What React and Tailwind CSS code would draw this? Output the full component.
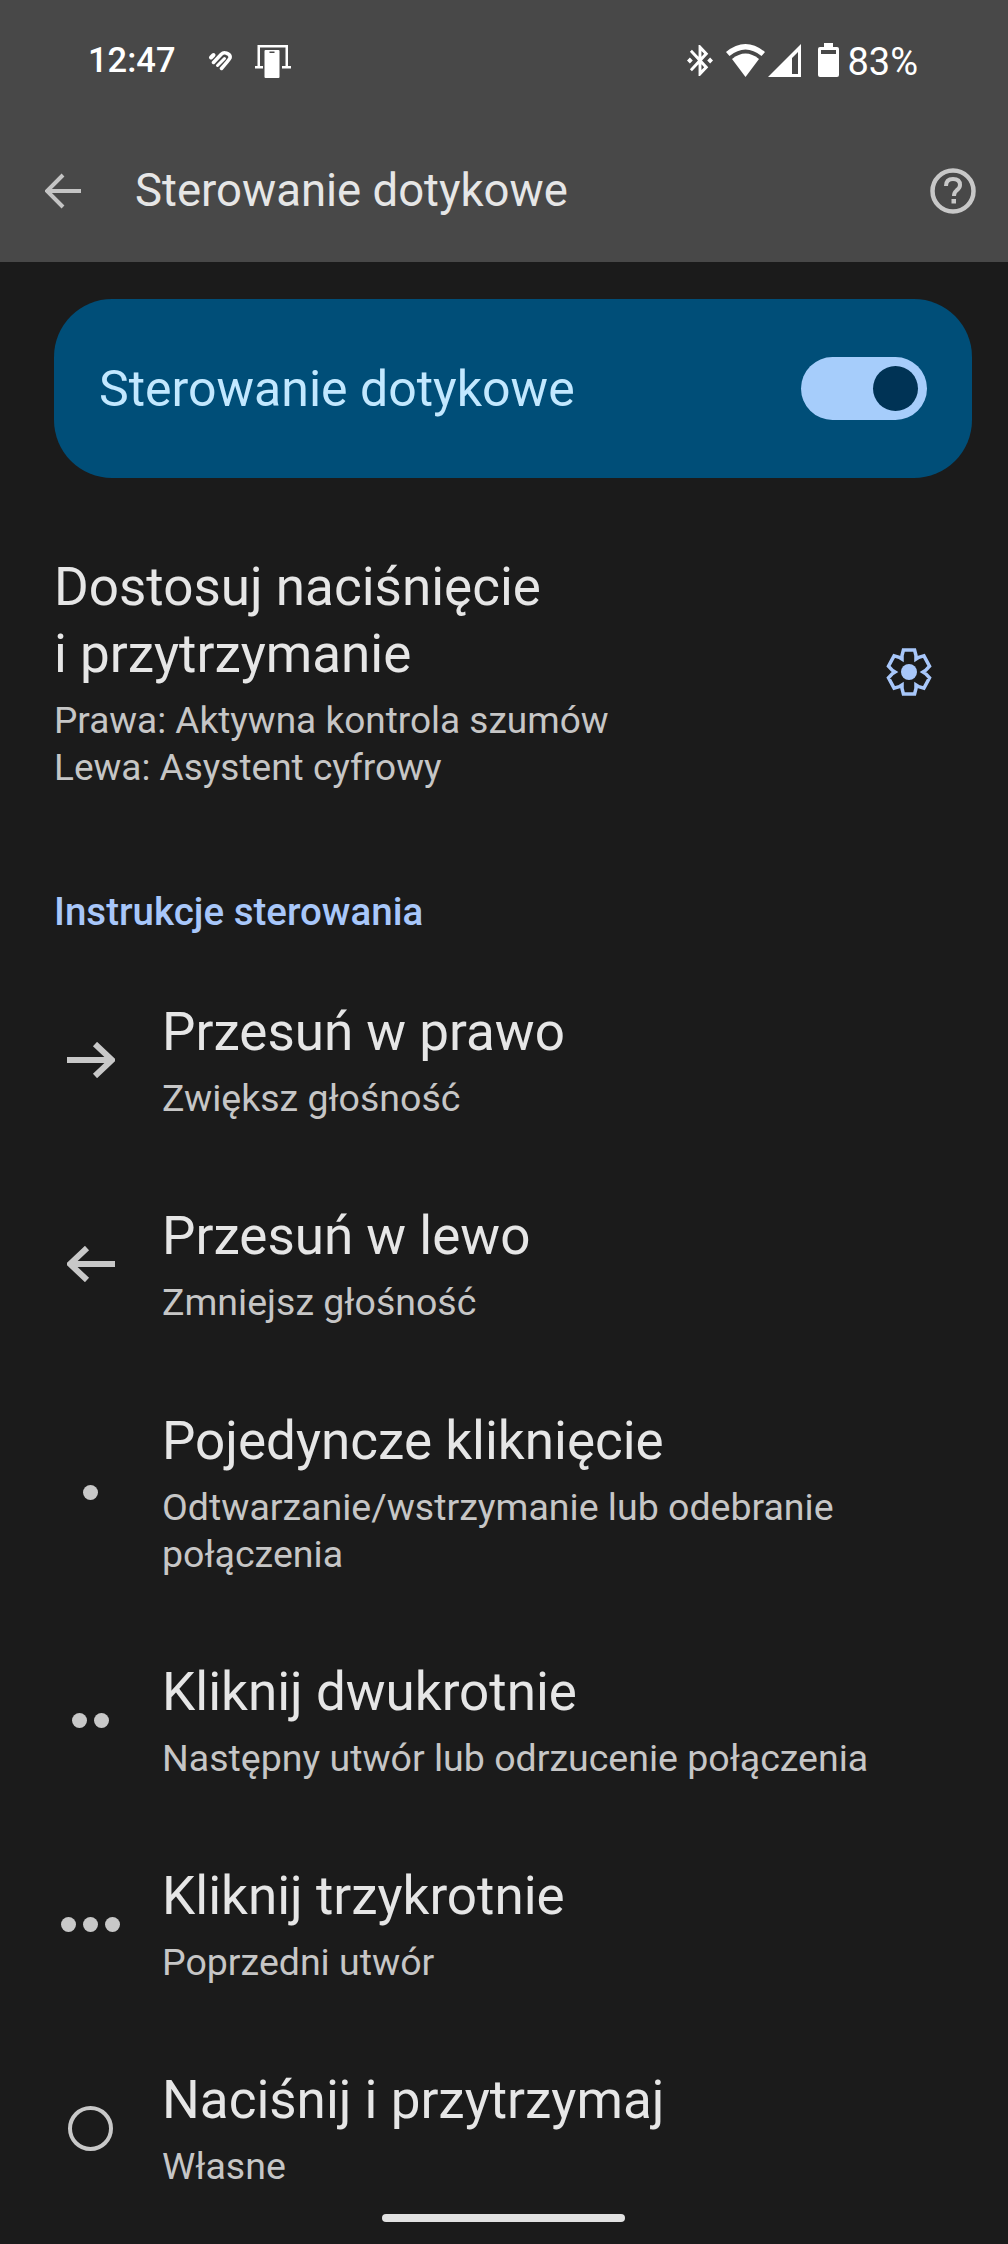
const sans = "font-['Roboto',sans-serif]";

function Row({ icon, title, sub, h }) {
  return (
    <div className={`flex items-center pl-[54px] pr-[36px] ${h}`}>
      <div className="w-[73px] shrink-0 flex justify-center items-center">{icon}</div>
      <div className="ml-[35px] min-w-0 flex-1 mt-[1px]">
        <div className="text-[53px] leading-[67px] text-[#e6e6e6]">{title}</div>
        <div className="mt-[9px] text-[37.500px] leading-[47px] text-[#c6c6c6]">{sub}</div>
      </div>
    </div>
  );
}

const Dot = () => <span className="block w-[15px] h-[15px] rounded-full bg-[#c8c8c8]" />;

function Arrow({ flip }) {
  return (
    <svg width="48" height="36" viewBox="0 0 48 36" className={flip ? "-scale-x-100" : ""}>
      <path d="M0 18H45M28 2L45 18L28 34" fill="none" stroke="#c8c8c8" strokeWidth="6" />
    </svg>
  );
}

function Gear() {
  let d = "";
  for (let k = 0; k < 6; k++) {
    const a = (k * Math.PI) / 3;
    const pts = [[-7.5, -16.5], [-6, -22], [6, -22], [7.5, -16.5], [7.5, -13]];
    pts.forEach(([x, y]) => {
      const px = 23 + (x * Math.cos(a) - y * Math.sin(a)) * 0.93;
      const py = 24 + x * Math.sin(a) + y * Math.cos(a);
      d += `${d ? "L" : "M"}${px.toFixed(2)} ${py.toFixed(2)}`;
    });
  }
  return (
    <svg width="46" height="48" viewBox="0 0 46 48">
      <path d={d + "Z"} fill="none" stroke="#a8c7fa" strokeWidth="3.500" strokeLinejoin="miter" />
      <circle cx="23" cy="24" r="8" fill="#a8c7fa" />
    </svg>
  );
}

function StatusBar() {
  return (
    <div className="h-[118px] relative flex items-start text-white font-medium">
      <span className="ml-[88px] mt-[39px] text-[34.500px] leading-[42px]">12:47</span>
      <svg width="25" height="21" viewBox="0 0 25 21" className="ml-[32px] mt-[50px]" fill="none" stroke="#fff" strokeLinecap="round">
        <path d="M3 7.500L5.500 5" strokeWidth="4" />
        <path d="M5.500 12.500L13 4.500Q15.500 2 18 3Q23 4.500 22 8Q21 10 13.500 18.500" strokeWidth="3.500" />
        <path d="M9.500 15.500L16.500 8.500" strokeWidth="3" />
      </svg>
      <svg width="36" height="33" viewBox="0 0 36 33" className="ml-[22px] mt-[45px]" fill="#fff">
        <path d="M2.500 0H33V21H30.500V2.500H5V21H2.500Z" />
        <path d="M0 21H8V23.500H0ZM27 21H36V23.500H27Z" />
        <path d="M9.500 6Q9.500 5 10.500 5H23.500Q24.500 5 24.500 6V32Q24.500 33 23.500 33H10.500Q9.500 33 9.500 32Z" />
        <rect x="14.500" y="6.500" width="5" height="1.500" fill="#484848" />
      </svg>
      <div className="ml-auto mr-[90px] mt-[43px] flex items-start">
        <svg width="26" height="31" viewBox="3 2 18 20" className="mt-[2px]" preserveAspectRatio="none" fill="#fff">
          <path d="M7 12l-2-2-2 2 2 2 2-2zm10.710-4.290L12 2h-1v7.590L6.410 5 5 6.410 10.590 12 5 17.590 6.410 19 11 14.410V22h1l5.710-5.710-4.300-4.290 4.300-4.290zM13 5.830l1.880 1.880L13 9.590V5.830zm1.880 10.460L13 18.170v-3.760l1.880 1.880zM19 10l-2 2 2 2 2-2-2-2z" />
        </svg>
        <svg width="39" height="33" viewBox="0 0 39 33" className="ml-[13px] mt-[1px]" fill="#fff">
          <path d="M0 8Q19.500 -8 39 8L35.500 12Q19.500 -1 3.500 12Z" />
          <path d="M6 15Q19.500 4 33 15L19.500 33Z" />
        </svg>
        <svg width="33" height="33" viewBox="0 0 33 33" className="ml-[3px] mt-[1px]" fill="#fff">
          <path fillRule="evenodd" d="M33 0V33H0ZM30 8L24 14V30H30Z" />
        </svg>
        <svg width="21" height="34" viewBox="0 0 21 34" className="ml-[17px]" fill="#fff">
          <path d="M6 0H15V4H19Q21 4 21 6V32Q21 34 19 34H2Q0 34 0 32V6Q0 4 2 4H6Z" />
          <rect x="3" y="7" width="15" height="4" fill="#484848" />
        </svg>
        <span className="ml-[8px] text-[38px] leading-[38px] font-normal">83%</span>
      </div>
    </div>
  );
}

export default function App() {
  return (
    <div className={`relative h-[2244px] overflow-hidden bg-[#1b1b1b] ${sans}`}>
      <header className="h-[262px] bg-[#484848]">
        <StatusBar />
        <div className="h-[146px] flex items-center pl-[45px] pr-[32px]">
          <svg width="36" height="36" viewBox="0 0 36 36">
            <path d="M36 18H3M18 2L2 18L18 34" fill="none" stroke="#c4c4c4" strokeWidth="4" />
          </svg>
          <span className="ml-[54px] text-[45.500px] leading-[56px] text-[#e6e6e6]">Sterowanie dotykowe</span>
          <svg width="46" height="46" viewBox="0 0 46 46" className="ml-auto">
            <circle cx="23" cy="23" r="20.500" fill="none" stroke="#c8c8c8" strokeWidth="4.500" />
            <path d="M16 18Q16 11 23 11Q30 11 30 17Q30 20 26.500 22.500Q24 24.500 24 28" fill="none" stroke="#c8c8c8" strokeWidth="4" />
            <rect x="21.500" y="31" width="4.500" height="4.500" fill="#c8c8c8" />
          </svg>
        </div>
      </header>

      <div className="mt-[37px] mx-[54px] w-[918px] h-[179px] rounded-[58px] bg-[#004e78] flex items-center pl-[45px] pr-[45px]">
        <span className="text-[50px] leading-[60px] text-[#c2e8ff]">Sterowanie dotykowe</span>
        <div className="ml-auto w-[126px] h-[63px] rounded-full bg-[#a6cdfb] flex items-center justify-end pr-[9px]">
          <span className="block w-[45px] h-[45px] rounded-full bg-[#003355]" />
        </div>
      </div>

      <div className="mt-[75px] pl-[54px] pr-[76px] flex items-center">
        <div>
          <div className="text-[53px] leading-[67px] text-[#e6e6e6] pt-[1px]">Dostosuj naciśnięcie<br />i przytrzymanie</div>
          <div className="mt-[9px] text-[37px] leading-[47px] text-[#c6c6c6]">Prawa: Aktywna kontrola szumów<br />Lewa: Asystent cyfrowy</div>
        </div>
        <div className="ml-auto"><Gear /></div>
      </div>

      <div className="mt-[97px] pl-[54px] h-[48px] text-[38.500px] leading-[48px] font-medium text-[#a8c7fa]">Instrukcje sterowania</div>

      <div className="mt-[22px]">
        <Row h="h-[204px]" icon={<Arrow />} title="Przesuń w prawo" sub="Zwiększ głośność" />
        <Row h="h-[204px]" icon={<Arrow flip />} title="Przesuń w lewo" sub="Zmniejsz głośność" />
        <Row h="h-[252px]" icon={<Dot />} title="Pojedyncze kliknięcie" sub="Odtwarzanie/wstrzymanie lub odebranie połączenia" />
        <Row h="h-[204px]" icon={<div className="flex gap-[7px]"><Dot /><Dot /></div>} title="Kliknij dwukrotnie" sub="Następny utwór lub odrzucenie połączenia" />
        <Row h="h-[204px]" icon={<div className="flex gap-[7px]"><Dot /><Dot /><Dot /></div>} title="Kliknij trzykrotnie" sub="Poprzedni utwór" />
        <Row h="h-[204px]" icon={<span className="block w-[45px] h-[45px] rounded-full border-[4px] border-[#c8c8c8]" />} title="Naciśnij i przytrzymaj" sub="Własne" />
      </div>

      <div className="absolute left-[382px] top-[2214px] w-[243px] h-[8px] rounded-full bg-[#e2e2e2]" />
    </div>
  );
}
